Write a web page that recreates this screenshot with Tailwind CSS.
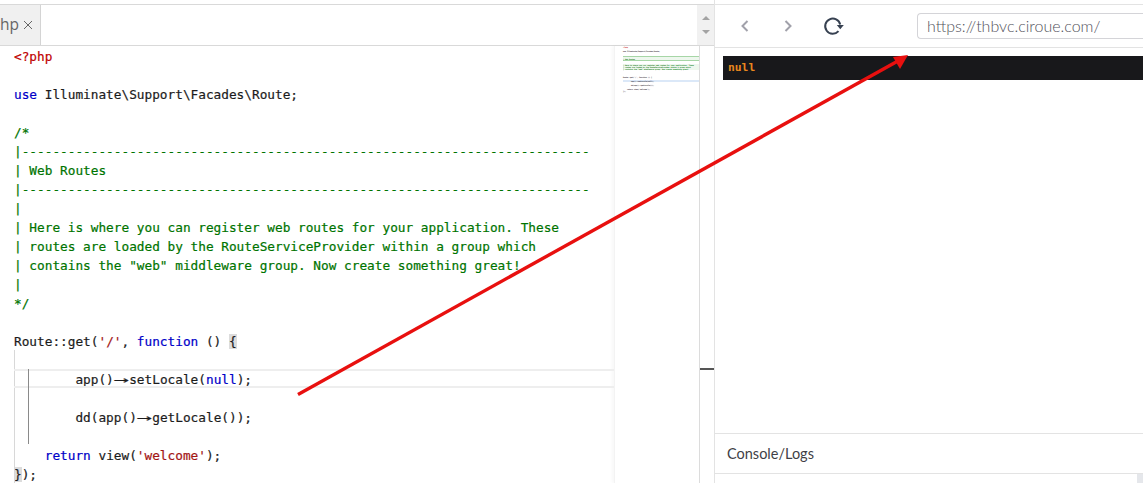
<!DOCTYPE html>
<html lang="en">
<head>
    <meta charset="UTF-8">
    <title>Editor and preview</title>
    <script src="https://cdn.jsdelivr.net/npm/@tailwindcss/browser@4"></script>
</head>
<body class="bg-white h-[483px] w-[1143px] overflow-hidden relative flex font-['Open_Sans',sans-serif]">
    <!-- editor side -->
    <div class="w-[715px] h-full flex flex-col pt-[4px] border-r border-[#e3e3e3] shrink-0">
        <div class="h-[42px] flex border-y border-[#d9d9d9] shrink-0">
            <div class="w-[41px] bg-[#f0f0f0] border-r border-[#d4d4d4] flex items-center gap-[4px] text-[15.5px] text-[#666] whitespace-nowrap">
                <span>hp</span>
                <svg class="w-[10px] h-[10px] text-[#666]" viewBox="0 0 10 10" fill="none" stroke="currentColor" stroke-width="1"><path d="M1 1l8 8M9 1 1 9"/></svg>
            </div>
            <div class="flex-1"></div>
            <div class="w-[17px] bg-[#f1f1f1] flex flex-col items-center justify-center gap-[10px]">
                <div class="w-0 h-0 border-x-[4px] border-x-transparent border-b-[4px] border-b-[#a3a3a3]"></div>
                <div class="w-0 h-0 border-x-[4px] border-x-transparent border-t-[4px] border-t-[#a3a3a3]"></div>
            </div>
        </div>
        <div class="flex-1 flex min-h-0">
            <div class="w-[614px] relative pt-[1px] font-['DejaVu_Sans_Mono',monospace] text-[12.75px] leading-[19px] [-webkit-text-stroke:0.2px] *:whitespace-pre *:h-[19px] text-[#1c1c1c] overflow-hidden shrink-0">
                <div class="absolute! left-[14px] top-[304px] h-[133px]! w-px bg-[#d8d8d8]"></div>
                <div class="absolute! left-[14px] right-0 top-[323px] border-y-2 border-[#eeeeee]"></div>
                <div class="absolute! left-[28px] top-[323px] h-[75px]! w-px bg-[#8a8a8a]"></div>
                <div class="pl-[14px] text-[#c00000]">&lt;?php</div>
                <div></div>
                <div class="pl-[14px]"><span class="text-[#0000c8]">use</span> Illuminate\Support\Facades\Route;</div>
                <div></div>
                <div class="pl-[14px] text-[#007400]">/*</div>
                <div class="pl-[14px] text-[#007400]">|--------------------------------------------------------------------------</div>
                <div class="pl-[14px] text-[#007400]">| Web Routes</div>
                <div class="pl-[14px] text-[#007400]">|--------------------------------------------------------------------------</div>
                <div class="pl-[14px] text-[#007400]">|</div>
                <div class="pl-[14px] text-[#007400]">| Here is where you can register web routes for your application. These</div>
                <div class="pl-[14px] text-[#007400]">| routes are loaded by the RouteServiceProvider within a group which</div>
                <div class="pl-[14px] text-[#007400]">| contains the "web" middleware group. Now create something great!</div>
                <div class="pl-[14px] text-[#007400]">|</div>
                <div class="pl-[14px] text-[#007400]">*/</div>
                <div></div>
                <div class="pl-[14px]">Route::get(<span class="text-[#a31515]">'/'</span>, <span class="text-[#0000c8]">function</span> () <span class="bg-[#dcdcdc]">{</span></div>
                <div></div>
                <div class="pl-[14px]">        app()<span class="inline-block w-[15.4px] text-center scale-x-200">→</span>setLocale(<span class="text-[#0000c8]">null</span>);</div>
                <div></div>
                <div class="pl-[14px]">        dd(app()<span class="inline-block w-[15.4px] text-center scale-x-200">→</span>getLocale());</div>
                <div></div>
                <div class="pl-[14px]">    <span class="text-[#0000c8]">return</span> view(<span class="text-[#a31515]">'welcome'</span>);</div>
                <div class="pl-[14px]"><span class="bg-[#dcdcdc]">}</span>);</div>
            </div>
            <!-- minimap -->
            <div class="w-[86px] border-l border-[#f3f3f3] border-r border-r-[#dcdcdc] shadow-[-2px_0_3px_rgba(0,0,0,0.03)] pl-[8px] font-['DejaVu_Sans_Mono',monospace] font-bold text-[1.67px] leading-[2px] *:whitespace-pre *:h-[2px] text-[#222] overflow-hidden shrink-0">
                <div class="text-[#c00000]">&lt;?php</div>
                <div></div>
                <div>use Illuminate\Support\Facades\Route;</div>
                <div></div>
                <div></div>
                <div class="border-t border-[#a6d6a6] bg-[#eef7ee]"></div>
                <div class="text-[#007400] bg-[#eef7ee]">| Web Routes</div>
                <div class="border-t border-[#a6d6a6]"></div>
                <div></div>
                <div class="text-[#007400] bg-[#eef7ee]">| Here is where you can register web routes for your application. These</div>
                <div class="text-[#007400] bg-[#eef7ee]">| routes are loaded by the RouteServiceProvider within a group which</div>
                <div class="text-[#007400] bg-[#eef7ee]">| contains the "web" middleware group. Now create something great!</div>
                <div></div>
                <div></div>
                <div></div>
                <div>Route::get('/', function () {</div>
                <div></div>
                <div class="bg-[#dbe8f8]">        app()-&gt;setLocale(null);</div>
                <div></div>
                <div>        dd(app()-&gt;getLocale());</div>
                <div></div>
                <div>    return view('welcome');</div>
                <div>});</div>
            </div>
            <div class="flex-1 relative">
                <div class="absolute left-0 right-0 top-[322px] h-[2px] bg-[#555]"></div>
            </div>
        </div>
    </div>

    <!-- preview side -->
    <div class="flex-1 flex flex-col pt-[4px] min-w-0">
        <div class="h-[44px] flex items-center border-y border-[#e3e3e3] shrink-0 pl-[24px] relative">
            <svg class="w-[12px] h-[14px] text-[#a1a1aa]" viewBox="0 0 12 14" fill="none" stroke="currentColor" stroke-width="2"><path d="M8.5 2 3.5 7l5 5"/></svg>
            <svg class="w-[12px] h-[14px] ml-[31px] text-[#a1a1aa]" viewBox="0 0 12 14" fill="none" stroke="currentColor" stroke-width="2"><path d="M3.5 2l5 5-5 5"/></svg>
            <svg class="w-[22px] h-[22px] ml-[28px] text-[#374151]" viewBox="0 0 22 22" fill="none" stroke="currentColor" stroke-width="2"><path d="M16.5 16.2A7.6 7.6 0 1 1 18.2 9.5"/><path d="M14.8 10h7l-3.5 4.2z" fill="currentColor" stroke="none"/></svg>
            <div class="ml-[73px] flex-1 h-[26px] border border-r-0 border-[#d4d4d8] rounded-l-[4px] flex items-center pl-[9px] text-[16px] font-light text-[#52525b] font-['Lato',sans-serif]">https://thbvc.ciroue.com/</div>
        </div>
        <div class="flex-1 pt-[8px] pl-[8px] min-h-0">
            <div class="h-[24px] bg-[#18181b] flex items-center pl-[5px] font-['DejaVu_Sans_Mono',monospace] font-bold text-[11.3px] text-[#e8871e]">null</div>
        </div>
        <div class="h-[41px] border-y border-[#e3e3e3] flex items-center pl-[12px] text-[14.5px] text-[#3f3f46] font-['Lato',sans-serif] shrink-0">Console/Logs</div>
        <div class="h-[9px] shrink-0 flex justify-end"><div class="w-[6px] bg-[#e5e7eb]"></div></div>
    </div>

    <!-- annotation arrow -->
    <svg class="absolute left-0 top-0 w-[1143px] h-[483px] pointer-events-none" viewBox="0 0 1143 483">
        <line x1="298" y1="394.5" x2="897" y2="61.5" stroke="#e8100f" stroke-width="3.4"/>
        <polygon points="908,55 893,57 900,69" fill="#e8100f"/>
    </svg>
</body>
</html>
